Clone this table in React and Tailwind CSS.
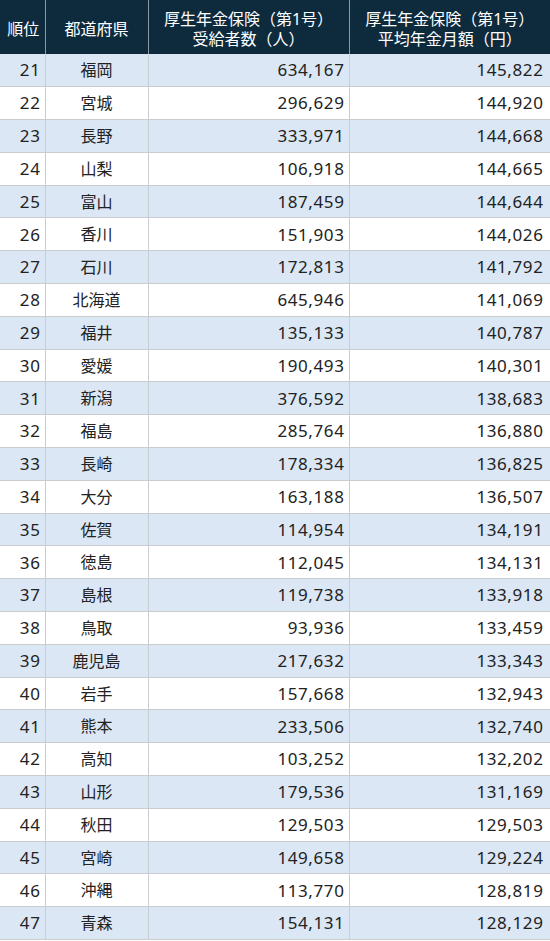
import React from 'react'

const rows = [
  [21, '福岡', '634,167', '145,822'],
  [22, '宮城', '296,629', '144,920'],
  [23, '長野', '333,971', '144,668'],
  [24, '山梨', '106,918', '144,665'],
  [25, '富山', '187,459', '144,644'],
  [26, '香川', '151,903', '144,026'],
  [27, '石川', '172,813', '141,792'],
  [28, '北海道', '645,946', '141,069'],
  [29, '福井', '135,133', '140,787'],
  [30, '愛媛', '190,493', '140,301'],
  [31, '新潟', '376,592', '138,683'],
  [32, '福島', '285,764', '136,880'],
  [33, '長崎', '178,334', '136,825'],
  [34, '大分', '163,188', '136,507'],
  [35, '佐賀', '114,954', '134,191'],
  [36, '徳島', '112,045', '134,131'],
  [37, '島根', '119,738', '133,918'],
  [38, '鳥取', '93,936', '133,459'],
  [39, '鹿児島', '217,632', '133,343'],
  [40, '岩手', '157,668', '132,943'],
  [41, '熊本', '233,506', '132,740'],
  [42, '高知', '103,252', '132,202'],
  [43, '山形', '179,536', '131,169'],
  [44, '秋田', '129,503', '129,503'],
  [45, '宮崎', '149,658', '129,224'],
  [46, '沖縄', '113,770', '128,819'],
  [47, '青森', '154,131', '128,129'],
]

export default function App() {
  return (
    <div className="w-[550px] bg-white text-[#222]" style={{ fontFamily: '"Noto Sans", "Noto Sans CJK JP", sans-serif' }}>
      <table className="w-[550px] border-collapse table-fixed">
        <colgroup>
          <col className="w-[45px]" />
          <col className="w-[103px]" />
          <col className="w-[201px]" />
          <col className="w-[201px]" />
        </colgroup>
        <thead>
          <tr className="h-[54px] bg-[#0e2b3d] text-white text-[16px] leading-[20px]">
            <th className="font-normal border-r border-[#8a98a3] pl-[2px] pt-[4px]">順位</th>
            <th className="font-normal border-r border-[#8a98a3] pt-[4px]">都道府県</th>
            <th className="font-normal border-r border-[#8a98a3] pt-[4px]">
              <div>厚生年金保険（第1号）</div>
              <div>受給者数（人）</div>
            </th>
            <th className="font-normal pt-[4px]">
              <div>厚生年金保険（第1号）</div>
              <div>平均年金月額（円）</div>
            </th>
          </tr>
        </thead>
        <tbody className="text-[17px] tracking-[0.6px]">
          {rows.map(([rank, pref, count, amount], i) => (
            <tr key={rank} className={`h-[32.8px] border-b border-[#c9cdd1] ${i % 2 === 0 ? 'bg-[#dbe7f5]' : 'bg-white'}`}>
              <td className="text-right pr-[4px] border-r border-[#c9cdd1]">{rank}</td>
              <td className="text-center text-[16px] tracking-normal border-r border-[#c9cdd1]">{pref}</td>
              <td className="text-right pr-[4px] border-r border-[#c9cdd1]">{count}</td>
              <td className="text-right pr-[6px] border-r border-[#c9cdd1]">{amount}</td>
            </tr>
          ))}
        </tbody>
      </table>
    </div>
  )
}
